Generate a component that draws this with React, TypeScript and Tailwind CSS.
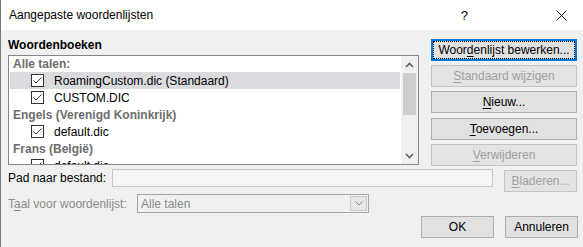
import React from 'react';

const Check = () => (
    <svg width="13" height="13" viewBox="0 0 13 13" className="shrink-0">
        <rect x="0.5" y="0.5" width="12" height="12" fill="white" stroke="#333333" />
        <path d="M2.5 6.5 L5 9 L10.5 3.5" fill="none" stroke="#333333" strokeWidth="1" />
    </svg>
);

const Group = ({ label, first }: { label: string; first?: boolean }) => (
    <div className={`${first ? 'h-[16px]' : 'h-[17px]'} flex items-center pl-[4px] text-[#6d6d6d] font-semibold`}>{label}</div>
);

const Item = ({ label, selected }: { label: string; selected?: boolean }) => (
    <div className={`h-[17px] mx-[1px] flex items-center pl-[21px] ${selected ? 'bg-[#dadbdf]' : ''}`}>
        <Check />
        <span className="ml-[10px] text-black">{label}</span>
    </div>
);

const Btn = ({ pre, key_, post, disabled, className = '' }: { pre: string; key_: string; post: string; disabled?: boolean; className?: string }) => (
    <div
        className={`h-[22px] flex items-center justify-center border ${disabled ? 'bg-[#e3e3e3] border-[#c4c4c4] text-[#a0a0a0]' : 'bg-[#e1e1e1] border-[#adadad] text-black'} ${className}`}
    >
        <span>
            {pre}
            <span className="underline underline-offset-2">{key_}</span>
            {post}
        </span>
    </div>
);

export default function App() {
    return (
        <div className="w-[583px] h-[247px] overflow-hidden bg-[#f0f0f0] border-l border-[#7a7a7a] font-['Liberation_Sans',Arial,sans-serif] text-[12px] leading-none">
            {/* title bar */}
            <div className="h-[30px] bg-white flex items-center pl-[8px] pr-[16px]">
                <span className="text-black flex-1">Aangepaste woordenlijsten</span>
                <span className="text-black text-[13px] mr-[88px]">?</span>
                <svg width="11" height="11" viewBox="0 0 11 11">
                    <path d="M0.5 0.5 L10.5 10.5 M10.5 0.5 L0.5 10.5" stroke="#111" strokeWidth="1" />
                </svg>
            </div>

            <div className="pl-[7px] pr-[5px] pt-[9px]">
                <div className="flex gap-[12px]">
                    {/* dictionaries */}
                    <div className="w-[411px]">
                        <div className="h-[16px] font-bold text-black">Woordenboeken</div>
                        <div className="h-[110px] border border-[#828790] bg-white flex overflow-hidden">
                            <div className="flex-1 overflow-hidden">
                                <Group label="Alle talen:" first />
                                <Item label="RoamingCustom.dic (Standaard)" selected />
                                <Item label="CUSTOM.DIC" />
                                <Group label="Engels (Verenigd Koninkrijk)" />
                                <Item label="default.dic" />
                                <Group label="Frans (België)" />
                                <Item label="default.dic" />
                            </div>
                            <div className="w-[17px] bg-[#f0f0f0] flex flex-col">
                                <div className="h-[17px] flex items-center justify-center">
                                    <svg width="9" height="6" viewBox="0 0 9 6">
                                        <path d="M1 5 L4.5 1.5 L8 5" fill="none" stroke="#606060" strokeWidth="1.6" />
                                    </svg>
                                </div>
                                <div className="h-[42px] mx-[2px] bg-[#cdcdcd]" />
                                <div className="flex-1" />
                                <div className="h-[17px] flex items-center justify-center">
                                    <svg width="9" height="6" viewBox="0 0 9 6">
                                        <path d="M1 1 L4.5 4.5 L8 1" fill="none" stroke="#606060" strokeWidth="1.6" />
                                    </svg>
                                </div>
                            </div>
                        </div>
                    </div>

                    {/* buttons */}
                    <div className="w-[146px] flex flex-col">
                        <div className="h-[22px] flex border-2 border-[#0078d7] bg-[#e1e1e1] text-black">
                            <div className="flex-1 flex items-center justify-center border border-dotted border-black">
                                <span>
                                    Woor<span className="underline underline-offset-2">d</span>enlijst bewerken...
                                </span>
                            </div>
                        </div>
                        <Btn pre="" key_="S" post="tandaard wijzigen" disabled className="mt-[4px]" />
                        <Btn pre="" key_="N" post="ieuw..." className="mt-[4px]" />
                        <Btn pre="" key_="T" post="oevoegen..." className="mt-[5px]" />
                        <Btn pre="" key_="V" post="erwijderen" disabled className="mt-[4px]" />
                    </div>
                </div>

                {/* path row */}
                <div className="flex mt-[3px] items-start">
                    <div className="w-[104px] h-[18px] flex items-center text-black">Pad naar bestand:</div>
                    <div className="w-[381px] h-[18px] border border-[#c6c6c6] bg-[#f5f5f5]" />
                    <Btn pre="" key_="B" post="laderen..." disabled className="ml-[11px] mt-[1px] w-[73px]" />
                </div>

                {/* language row */}
                <div className="flex mt-[2px] items-center">
                    <div className="w-[129px] text-[#8a8a8a]">
                        T<span className="underline underline-offset-2">a</span>al voor woordenlijst:
                    </div>
                    <div className="w-[232px] h-[19px] border border-[#a6a6a6] bg-[#f0f0f0] flex items-center">
                        <span className="flex-1 pl-[3px] text-[#8a8a8a]">Alle talen</span>
                        <div className="w-[17px] h-[15px] mr-[1px] border border-[#c8c8c8] bg-[#e6e6e6] flex items-center justify-center">
                            <svg width="8" height="5" viewBox="0 0 8 5">
                                <path d="M0.5 0.5 L4 4 L7.5 0.5" fill="none" stroke="#8a8a8a" strokeWidth="1" />
                            </svg>
                        </div>
                    </div>
                </div>

                {/* ok / cancel */}
                <div className="flex justify-end mt-[3px] gap-[11px]">
                    <Btn pre="OK" key_="" post="" className="w-[73px]" />
                    <Btn pre="Annuleren" key_="" post="" className="w-[73px]" />
                </div>
            </div>
        </div>
    );
}
